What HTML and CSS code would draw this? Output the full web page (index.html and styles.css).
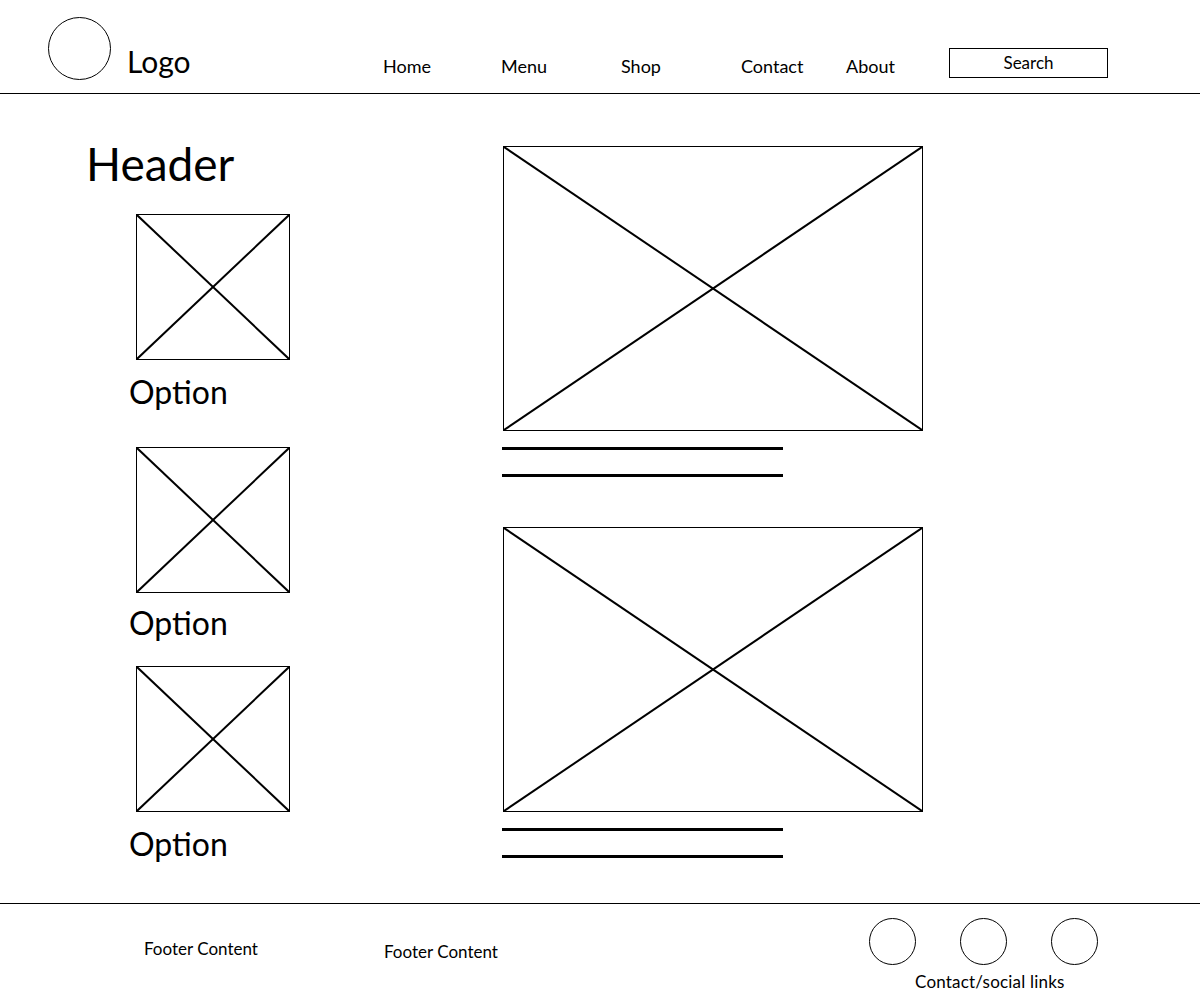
FILE: index.html
```html
<!DOCTYPE html>
<html lang="en">

<head>
    <meta charset="UTF-8">
    <meta name="viewport" content="width=device-width, initial-scale=1.0">
    <title>Wireframe</title>
    <link rel="stylesheet" href="styles.css">
</head>

<body>
    <!-- Top bar -->
    <header class="topbar">
        <div class="brand">
            <div class="logo-circle"></div>
            <span class="logo-text">Logo</span>
        </div>
        <ul class="nav">
            <li class="nav-home"><a href="#">Home</a></li>
            <li class="nav-menu"><a href="#">Menu</a></li>
            <li class="nav-shop"><a href="#">Shop</a></li>
            <li class="nav-contact"><a href="#">Contact</a></li>
            <li class="nav-about"><a href="#">About</a></li>
        </ul>
        <div class="search">Search</div>
    </header>

    <!-- Main Content -->
    <main class="content">
        <div class="sidebar">
            <h1>Header</h1>
            <div class="option">
                <div class="placeholder small">
                    <svg viewBox="0 0 100 100" preserveAspectRatio="none">
                        <line x1="0" y1="0" x2="100" y2="100" />
                        <line x1="100" y1="0" x2="0" y2="100" />
                    </svg>
                </div>
                <div class="option-label">Option</div>
            </div>
            <div class="option">
                <div class="placeholder small">
                    <svg viewBox="0 0 100 100" preserveAspectRatio="none">
                        <line x1="0" y1="0" x2="100" y2="100" />
                        <line x1="100" y1="0" x2="0" y2="100" />
                    </svg>
                </div>
                <div class="option-label">Option</div>
            </div>
            <div class="option">
                <div class="placeholder small">
                    <svg viewBox="0 0 100 100" preserveAspectRatio="none">
                        <line x1="0" y1="0" x2="100" y2="100" />
                        <line x1="100" y1="0" x2="0" y2="100" />
                    </svg>
                </div>
                <div class="option-label">Option</div>
            </div>
        </div>

        <div class="feed">
            <div class="post">
                <div class="placeholder large">
                    <svg viewBox="0 0 100 100" preserveAspectRatio="none">
                        <line x1="0" y1="0" x2="100" y2="100" />
                        <line x1="100" y1="0" x2="0" y2="100" />
                    </svg>
                </div>
                <div class="text-line"></div>
                <div class="text-line"></div>
            </div>
            <div class="post">
                <div class="placeholder large">
                    <svg viewBox="0 0 100 100" preserveAspectRatio="none">
                        <line x1="0" y1="0" x2="100" y2="100" />
                        <line x1="100" y1="0" x2="0" y2="100" />
                    </svg>
                </div>
                <div class="text-line"></div>
                <div class="text-line"></div>
            </div>
        </div>
    </main>

    <!-- Footer -->
    <footer class="footer">
        <div class="footer-col first">Footer Content</div>
        <div class="footer-col second">Footer Content</div>
        <div class="social">
            <div class="social-icons">
                <span class="circle"></span>
                <span class="circle"></span>
                <span class="circle"></span>
            </div>
            <div class="social-label">Contact/social links</div>
        </div>
    </footer>
</body>

</html>
```

FILE: styles.css
```css
* {
    box-sizing: border-box;
}

body {
    font-family: Lato, "Open Sans", sans-serif;
    background: #fff;
    color: #000;
    margin: 0;
    padding: 0;
    width: 1200px;
}

/* Top bar */
.topbar {
    display: flex;
    align-items: flex-start;
    height: 94px;
    padding-left: 48px;
    border-bottom: 1px solid #000;
}

.brand {
    display: flex;
    align-items: flex-start;
    width: 335px;
}

.logo-circle {
    width: 63px;
    height: 63px;
    margin-top: 17px;
    border: 1px solid #000;
    border-radius: 50%;
}

.logo-text {
    font-size: 30px;
    line-height: 1.2;
    margin-top: 43px;
    margin-left: 16px;
}

.nav {
    list-style: none;
    display: flex;
    margin: 56px 0 0;
    padding: 0;
}

.nav li {
    font-size: 18px;
    line-height: 1.2;
}

.nav a {
    color: #000;
    text-decoration: none;
}

.nav-home { width: 118px; }
.nav-menu { width: 120px; }
.nav-shop { width: 120px; }
.nav-contact { width: 105px; }
.nav-about { width: 103px; }

.search {
    width: 159px;
    height: 30px;
    margin-top: 48px;
    border: 1px solid #000;
    font-size: 17px;
    line-height: 27px;
    text-align: center;
}

/* Main Content */
.content {
    display: flex;
    height: 809px;
    padding-left: 84px;
}

.sidebar {
    width: 418px;
}

h1 {
    font-size: 46px;
    font-weight: normal;
    line-height: 1.2;
    margin: 42px 0 0 2px;
}

.placeholder {
    border: 1px solid #000;
}

.placeholder svg {
    display: block;
    width: 100%;
    height: 100%;
}

.placeholder line {
    stroke: #000;
    stroke-width: 2;
    vector-effect: non-scaling-stroke;
}

.small {
    width: 154px;
    height: 146px;
    margin-left: 52px;
}

.option:nth-child(2) { margin-top: 23px; }
.option:nth-child(3) { margin-top: 35px; }
.option:nth-child(4) { margin-top: 24px; }

.option-label {
    font-size: 32px;
    line-height: 1.2;
    margin: 13px 0 0 45px;
}

.option:nth-child(3) .option-label {
    margin-top: 11px;
}

.feed {
    padding-top: 52px;
}

.post + .post {
    margin-top: 50px;
}

.large {
    width: 420px;
    height: 285px;
    margin-left: 1px;
}

.text-line {
    width: 281px;
    height: 3px;
    background: #000;
    margin-top: 24px;
}

.large + .text-line {
    margin-top: 16px;
}

/* Footer */
.footer {
    display: flex;
    align-items: flex-start;
    height: 96px;
    padding-left: 144px;
    border-top: 1px solid #000;
    font-size: 17px;
    line-height: 1.2;
}

.footer-col.first {
    width: 240px;
    margin-top: 35px;
}

.footer-col.second {
    width: 485px;
    margin-top: 38px;
}

.social {
    margin-top: 14px;
}

.social-icons {
    display: flex;
    gap: 44px;
}

.circle {
    width: 47px;
    height: 47px;
    border: 1px solid #000;
    border-radius: 50%;
}

.social-label {
    margin: 7px 0 0 46px;
    letter-spacing: 0.2px;
}
```
